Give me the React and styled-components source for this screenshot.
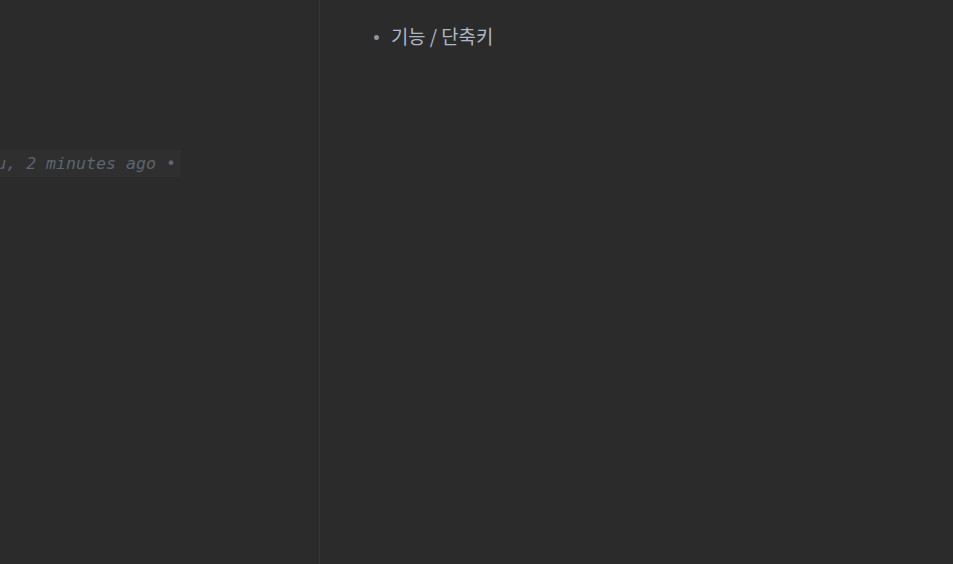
import React from "react";
import styled, { createGlobalStyle } from "styled-components";

const Global = createGlobalStyle`
  html, body { margin: 0; padding: 0; background: #2b2b2b; }
  #root { height: 564px; }
`;

const Page = styled.div`
  display: flex;
  width: 953px;
  height: 564px;
  background: #2b2b2b;
  overflow: hidden;
`;

const EditorPane = styled.div`
  width: 319px;
  flex: none;
  border-right: 1px solid #363636;
  display: flex;
  flex-direction: column;
  padding-top: 150px;
  overflow: hidden;
`;

const Blame = styled.div`
  width: 181px;
  height: 27px;
  box-sizing: border-box;
  background: #2f2f2f;
  display: flex;
  align-items: center;
  justify-content: flex-end;
  padding-right: 5px;
  overflow: hidden;
`;

const BlameText = styled.span`
  font-family: "DejaVu Sans Mono", "Liberation Mono", monospace;
  font-style: italic;
  font-size: 16.6px;
  color: #5c6570;
  white-space: nowrap;
  flex: none;
`;

const PreviewPane = styled.div`
  flex: 1;
  padding: 24px 0 0 0;
`;

const List = styled.ul`
  margin: 0;
  padding: 0 0 0 54px;
  list-style: none;
`;

const Item = styled.li`
  display: flex;
  align-items: center;
  gap: 12px;
  font-family: "Noto Sans CJK KR", "Noto Sans", sans-serif;
  font-size: 18.8px;
  line-height: 24px;
  color: #adb8c6;
`;

const Bullet = styled.span`
  width: 5px;
  height: 5px;
  border-radius: 50%;
  background: #8e96a0;
  flex: none;
  margin-top: 3px;
`;

export default function App() {
  return (
    <>
      <Global />
      <Page>
        <EditorPane>
          <Blame>
            <BlameText>You, 2 minutes ago •</BlameText>
          </Blame>
        </EditorPane>
        <PreviewPane>
          <List>
            <Item>
              <Bullet />
              기능 / 단축키
            </Item>
          </List>
        </PreviewPane>
      </Page>
    </>
  );
}
